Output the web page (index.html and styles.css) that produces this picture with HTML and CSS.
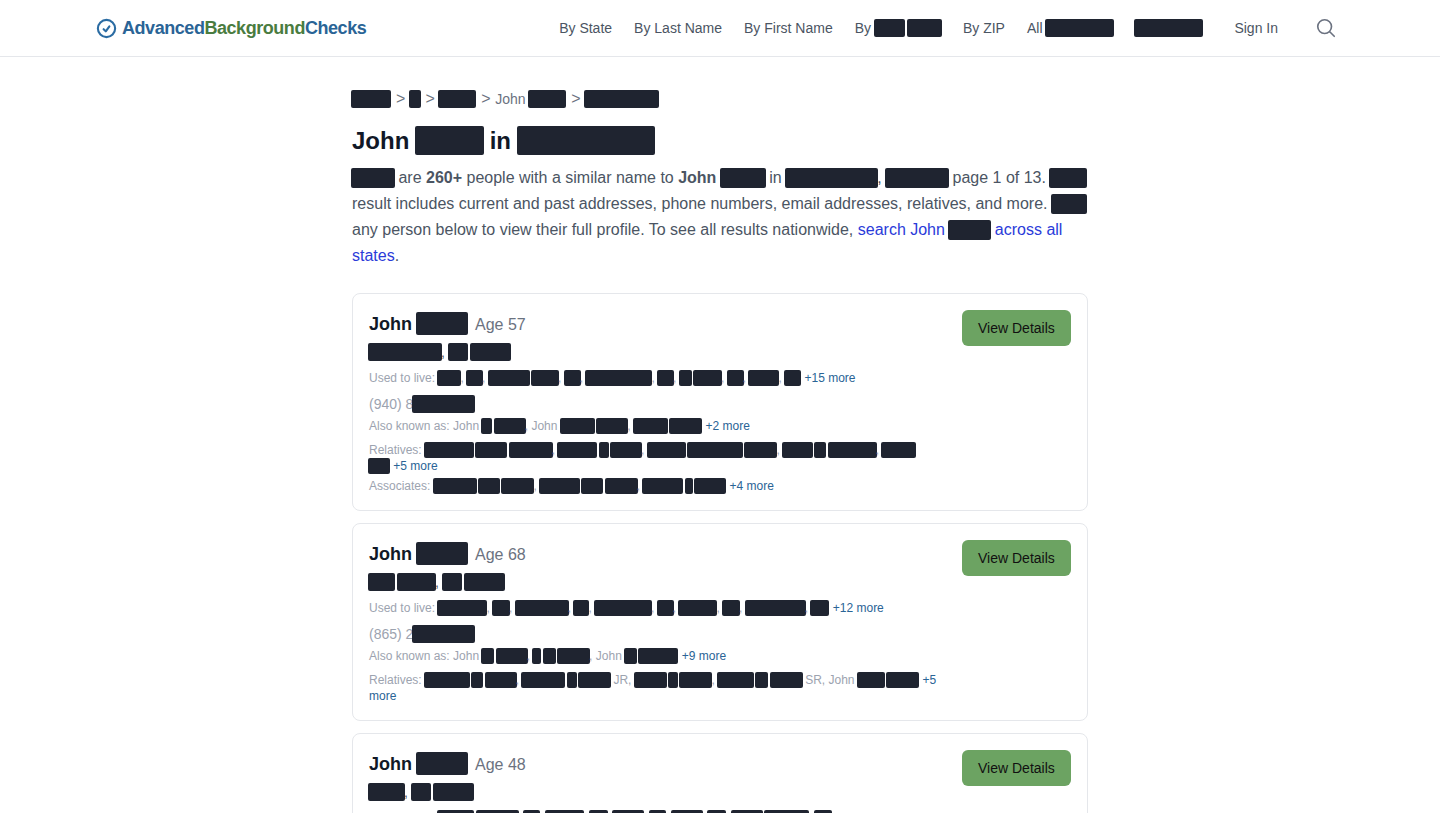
FILE: index.html
```html
<!DOCTYPE html>
<html lang="en">
<head>
  <meta charset="UTF-8">
  <title>John in - AdvancedBackgroundChecks</title>
  <link rel="stylesheet" href="styles.css">
</head>
<body>
  <header class="site-header">
    <a class="logo" href="#">
      <svg class="logo-icon" viewBox="0 0 24 24" fill="none" stroke="currentColor" stroke-width="2.2" stroke-linecap="round" stroke-linejoin="round"><path d="M9 12.75L11.25 15 15 9.75M21 12a9 9 0 11-18 0 9 9 0 0118 0z"/></svg>
      <span>Advanced<span class="logo-green">Background</span>Checks</span>
    </a>
    <nav class="nav">
      <a href="#">By State</a>
      <a href="#">By Last Name</a>
      <a href="#">By First Name</a>
      <a href="#">By<i class="r w31 tight"></i> <i class="r w35"></i></a>
      <a href="#">By ZIP</a>
      <a href="#">All <i class="r w69"></i></a>
      <a href="#"><i class="r w69"></i></a>
      <a class="sign-in" href="#">Sign In</a>
      <svg class="search-icon" viewBox="0 0 24 24" fill="none" stroke="currentColor" stroke-width="1.8" stroke-linecap="round" stroke-linejoin="round"><path d="M21 21l-5.197-5.197m0 0A7.5 7.5 0 105.196 5.196a7.5 7.5 0 0010.607 10.607z"/></svg>
    </nav>
  </header>

  <main class="main">
    <div class="crumbs">
      <i class="r w40"></i> <span class="sep">&gt;</span> <i class="r w12"></i> <span class="sep">&gt;</span> <i class="r w38"></i> <span class="sep">&gt;</span> John <i class="r w38"></i> <span class="sep">&gt;</span> <i class="r w75"></i>
    </div>
    <h1>John <i class="r w69"></i> in <i class="r w138"></i></h1>
    <p class="intro">
      <i class="r w44"></i> are <b>260+</b> people with a similar name to <b>John</b> <i class="r w46"></i> in <i class="r w93"></i>, <i class="r w64"></i> page 1 of 13. <i class="r w38"></i> result includes current and past addresses, phone numbers, email addresses, relatives, and more. <i class="r w36"></i> any person below to view their full profile. To see all results nationwide, <a href="#">search John <i class="r w43"></i> across all states</a>.
    </p>

    <article class="card">
      <div class="card-body">
        <div class="person"><b>John</b> <i class="r w52"></i> <span class="age">Age 57</span></div>
        <div class="place"><i class="r w74"></i>, <i class="r w20"></i> <i class="r w41"></i></div>
        <div class="small mt8">Used to live: <i class="r w24"></i>, <i class="r w17"></i>, <i class="r w42"></i> <i class="r w28"></i>, <i class="r w17"></i>, <i class="r w67"></i>, <i class="r w17"></i>, <i class="r w13"></i> <i class="r w29"></i>, <i class="r w17"></i>, <i class="r w31"></i>, <i class="r w17"></i> <a href="#">+15 more</a></div>
        <div class="phone">(940) 8<i class="r w63"></i></div>
        <div class="small mt4">Also known as: John <i class="r w11"></i> <i class="r w32"></i>, John <i class="r w35"></i> <i class="r w32"></i>, <i class="r w35"></i> <i class="r w33"></i> <a href="#">+2 more</a></div>
        <div class="small mt8">Relatives: <i class="r w50"></i> <i class="r w32"></i> <i class="r w44"></i>, <i class="r w40"></i> <i class="r w10"></i> <i class="r w32"></i>, <i class="r w39"></i> <i class="r w56"></i> <i class="r w33"></i>, <i class="r w31"></i> <i class="r w12"></i> <i class="r w49"></i>, <i class="r w35"></i> <i class="r w22"></i> <a href="#">+5 more</a></div>
        <div class="small mt4">Associates: <i class="r w44"></i> <i class="r w22"></i> <i class="r w33"></i>, <i class="r w41"></i> <i class="r w22"></i> <i class="r w33"></i>, <i class="r w41"></i> <i class="r w8"></i> <i class="r w32"></i> <a href="#">+4 more</a></div>
      </div>
      <a class="btn" href="#">View Details</a>
    </article>

    <article class="card">
      <div class="card-body">
        <div class="person"><b>John</b> <i class="r w52"></i> <span class="age">Age 68</span></div>
        <div class="place"><i class="r w27"></i> <i class="r w39"></i>, <i class="r w20"></i> <i class="r w41"></i></div>
        <div class="small mt8">Used to live: <i class="r w50"></i>, <i class="r w18"></i>, <i class="r w54"></i>, <i class="r w16"></i>, <i class="r w58"></i>, <i class="r w17"></i>, <i class="r w39"></i>, <i class="r w18"></i>, <i class="r w61"></i>, <i class="r w19"></i> <a href="#">+12 more</a></div>
        <div class="phone">(865) 2<i class="r w63"></i></div>
        <div class="small mt4">Also known as: John <i class="r w13"></i> <i class="r w32"></i>, <i class="r w9"></i> <i class="r w13"></i> <i class="r w33"></i>, John <i class="r w13"></i> <i class="r w40"></i> <a href="#">+9 more</a></div>
        <div class="small mt8">Relatives: <i class="r w46"></i> <i class="r w12"></i> <i class="r w32"></i>, <i class="r w44"></i> <i class="r w10"></i> <i class="r w33"></i> JR, <i class="r w33"></i> <i class="r w10"></i> <i class="r w33"></i>, <i class="r w37"></i> <i class="r w13"></i> <i class="r w33"></i> SR, John <i class="r w28"></i> <i class="r w33"></i> <a href="#">+5 more</a></div>
      </div>
      <a class="btn" href="#">View Details</a>
    </article>

    <article class="card">
      <div class="card-body">
        <div class="person"><b>John</b> <i class="r w52"></i> <span class="age">Age 48</span></div>
        <div class="place"><i class="r w37"></i>, <i class="r w20"></i> <i class="r w41"></i></div>
        <div class="small mt8">Used to live: <i class="r w37"></i> <i class="r w43"></i>, <i class="r w17"></i>, <i class="r w39"></i>, <i class="r w19"></i>, <i class="r w32"></i>, <i class="r w17"></i>, <i class="r w32"></i>, <i class="r w19"></i>, <i class="r w32"></i> <i class="r w45"></i>, <i class="r w18"></i> <a href="#">+9 more</a></div>
      </div>
      <a class="btn" href="#">View Details</a>
    </article>
  </main>
</body>
</html>
```

FILE: styles.css
```css
:root {
  --ink: #111827;
  --text: #4b5563;
  --muted: #9ca3af;
  --border: #e5e7eb;
  --blue: #2a6496;
  --green: #4a7c3f;
  --redact: #1f2430;
}

* {
  box-sizing: border-box;
}

body {
  margin: 0;
  background: #fff;
  color: var(--text);
  font-family: "Liberation Sans", Arial, sans-serif;
  font-size: 16px;
}

a {
  color: inherit;
  text-decoration: none;
}

/* redaction boxes, sized by context below */
.r {
  display: inline-block;
  height: 16px;
  margin: -4px -1px;
  background: var(--redact);
  border-radius: 2px;
}

.w8 { width: 8px; }
.w9 { width: 9px; }
.w10 { width: 10px; }
.w11 { width: 11px; }
.w12 { width: 12px; }
.w13 { width: 13px; }
.w16 { width: 16px; }
.w17 { width: 17px; }
.w18 { width: 18px; }
.w19 { width: 19px; }
.w20 { width: 20px; }
.w22 { width: 22px; }
.w24 { width: 24px; }
.w27 { width: 27px; }
.w28 { width: 28px; }
.w29 { width: 29px; }
.w31 { width: 31px; }
.w32 { width: 32px; }
.w33 { width: 33px; }
.w35 { width: 35px; }
.w36 { width: 36px; }
.w37 { width: 37px; }
.w38 { width: 38px; }
.w39 { width: 39px; }
.w40 { width: 40px; }
.w41 { width: 41px; }
.w42 { width: 42px; }
.w43 { width: 43px; }
.w44 { width: 44px; }
.w45 { width: 45px; }
.w46 { width: 46px; }
.w49 { width: 49px; }
.w50 { width: 50px; }
.w52 { width: 52px; }
.w54 { width: 54px; }
.w56 { width: 56px; }
.w58 { width: 58px; }
.w61 { width: 61px; }
.w63 { width: 63px; }
.w64 { width: 64px; }
.w67 { width: 67px; }
.w69 { width: 69px; }
.w74 { width: 74px; }
.w75 { width: 75px; }
.w93 { width: 93px; }
.w138 { width: 138px; }

/* header */
.site-header {
  display: flex;
  justify-content: space-between;
  align-items: center;
  height: 57px;
  padding: 0 103px 0 94px;
  border-bottom: 1px solid var(--border);
}

.logo {
  display: flex;
  align-items: center;
  color: var(--blue);
  font-size: 18px;
  font-weight: 700;
  letter-spacing: -0.45px;
}

.logo-icon {
  width: 23px;
  height: 23px;
  margin: 0 4.5px 0 0.5px;
  color: #2b6ca3;
}

.logo-green {
  color: var(--green);
}

.nav {
  display: flex;
  align-items: center;
  gap: 22px;
  font-size: 14px;
  line-height: 20px;
}

.nav .r {
  height: 18px;
}

.nav .tight {
  margin-left: 3px;
}

.sign-in {
  margin-left: 10px;
  margin-right: 15px;
}

.search-icon {
  width: 22px;
  height: 22px;
  color: #6b7280;
}

/* main column */
.main {
  width: 736px;
  margin: 0 auto;
  padding-top: 32px;
}

.crumbs {
  color: #6b7280;
  font-size: 14px;
  line-height: 20px;
}

.crumbs .r {
  height: 18px;
}

.sep {
  margin: 0 0.6px 0 2px;
  font-size: 16px;
}

h1 {
  margin: 16px 0 8px;
  color: var(--ink);
  font-size: 24px;
  line-height: 32px;
}

h1 .r {
  height: 29.5px;
  margin-top: -6px;
  margin-bottom: -6px;
}

.intro {
  margin: 0 0 24px;
  line-height: 26px;
}

.intro .r {
  height: 20px;
  margin-top: -4.5px;
  margin-bottom: -4.5px;
}

.intro a {
  color: #2a3bd9;
}

/* result cards */
.card {
  display: flex;
  align-items: flex-start;
  margin-bottom: 12px;
  padding: 16px;
  border: 1px solid var(--border);
  border-radius: 8px;
}

.card-body {
  flex: 0 0 568px;
  margin-right: 25px;
}

.person {
  color: #6b7280;
  font-size: 18px;
  line-height: 28px;
}

.person b {
  color: var(--ink);
}

.person .r {
  height: 22.5px;
  margin-top: -4.75px;
  margin-bottom: -4.75px;
}

.age {
  margin-left: 3px;
  font-size: 16px;
  line-height: 1;
}

.place {
  margin-top: 4px;
  font-size: 14px;
  line-height: 20px;
}

.place .r,
.phone .r {
  height: 18px;
}

.small {
  color: var(--muted);
  font-size: 12px;
  line-height: 16px;
}

.small a {
  margin-left: 1px;
  color: var(--blue);
}

.mt4 {
  margin-top: 4px;
}

.mt8 {
  margin-top: 8px;
}

.phone {
  margin-top: 8px;
  color: var(--muted);
  font-size: 14px;
  line-height: 20px;
}

.btn {
  flex: none;
  padding: 8px 16px;
  background: #6ca362;
  border-radius: 6px;
  color: #111;
  font-size: 14px;
  line-height: 20px;
}
```
